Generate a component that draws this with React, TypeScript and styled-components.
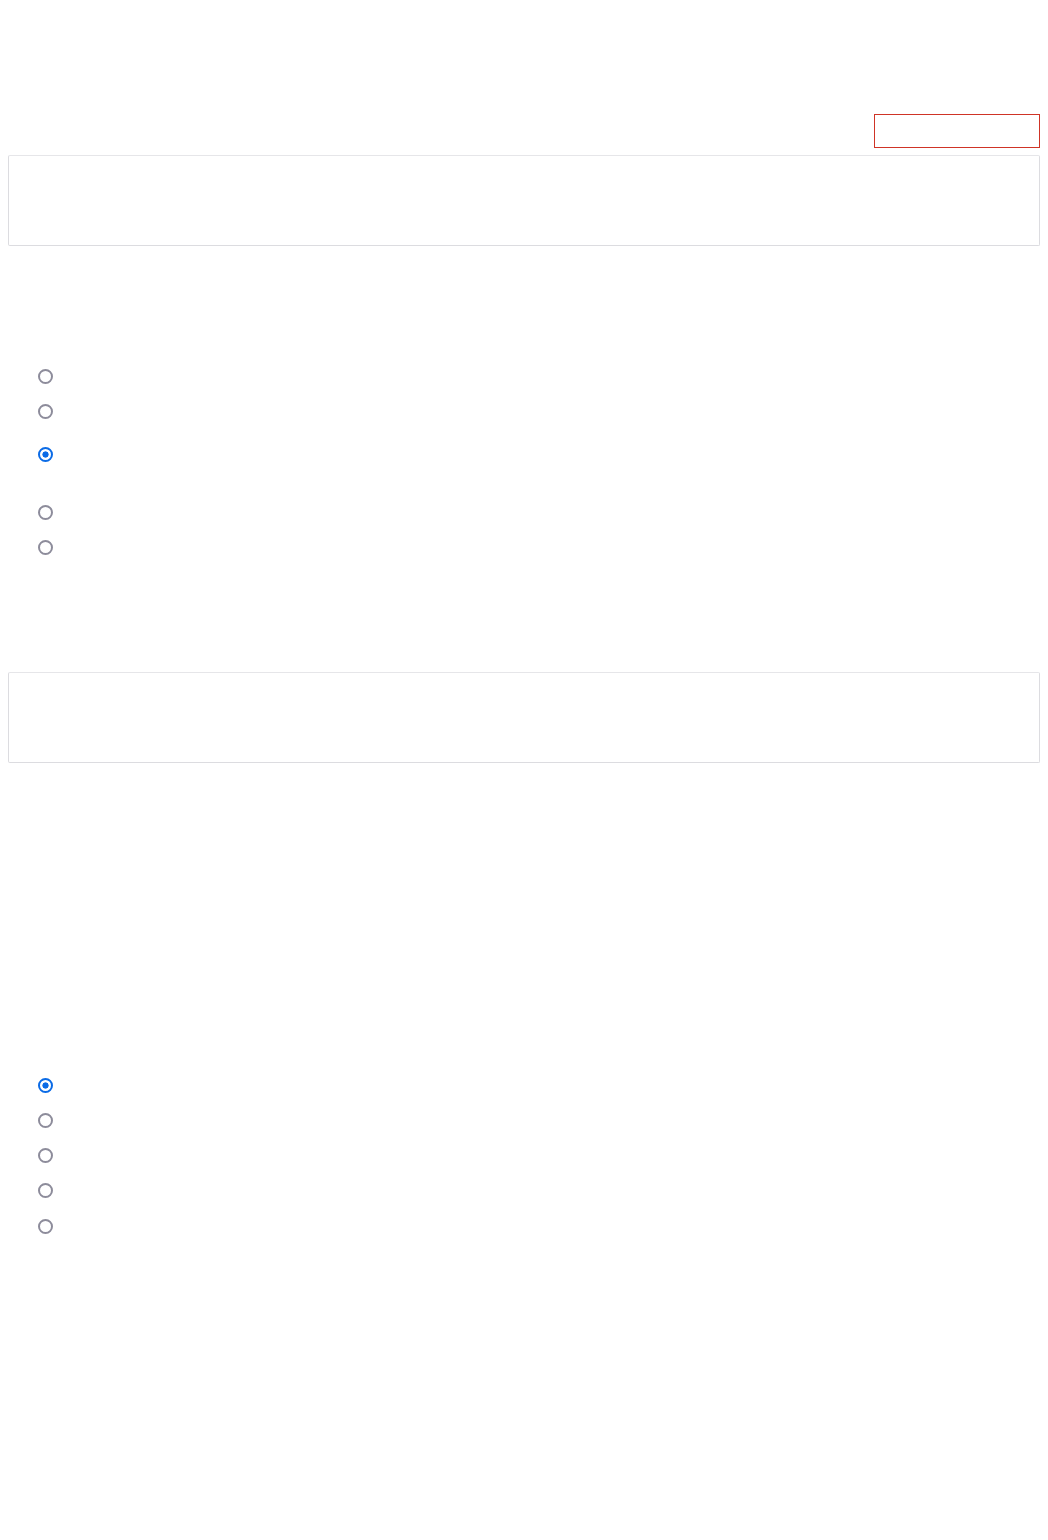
import React from "react";
import styled, { createGlobalStyle } from "styled-components";

const GlobalStyle = createGlobalStyle`
  body {
    margin: 8px;
    background: #ffffff;
    font-family: "Liberation Sans", Arial, sans-serif;
    color: #ffffff;
  }
`;

const Page = styled.main`
  display: flex;
  flex-direction: column;
  width: 1032px;
`;

const TopBar = styled.header`
  display: flex;
  justify-content: flex-end;
  padding-top: 106px;
`;

const ErrorButton = styled.button`
  width: 166px;
  height: 34px;
  border: 1px solid #cf3426;
  border-radius: 0;
  background: #ffffff;
  padding: 0;
`;

const TextBox = styled.textarea<{ $top: number }>`
  display: block;
  box-sizing: border-box;
  width: 100%;
  height: 91px;
  margin-top: ${(p) => p.$top}px;
  border: 1px solid #dcdce0;
  border-top-color: #e6e6e9;
  border-radius: 2px;
  resize: none;
  outline: none;
  background: #ffffff;
  font-family: "Liberation Sans", Arial, sans-serif;
`;

const OptionList = styled.ul<{ $top: number }>`
  list-style: none;
  margin: ${(p) => p.$top}px 0 0;
  padding: 0 0 0 29.5px;
  display: flex;
  flex-direction: column;
`;

const Option = styled.li<{ $before?: number; $after?: number }>`
  display: flex;
  align-items: center;
  height: 35px;
  margin-top: ${(p) => p.$before ?? 0}px;
  margin-bottom: ${(p) => p.$after ?? 0}px;
`;

const Radio = styled.input`
  appearance: none;
  box-sizing: border-box;
  width: 15px;
  height: 15px;
  margin: 0;
  border: 2px solid #8d8c9b;
  border-radius: 50%;
  background: #ffffff;

  &:checked {
    border-color: #0b6be6;
    background: radial-gradient(circle, #0b6be6 0 2.8px, #ffffff 3.4px);
  }
`;

interface Choice {
  id: string;
  before?: number;
  after?: number;
}

const firstChoices: Choice[] = [
  { id: "a1" },
  { id: "a2" },
  { id: "a3", before: 8, after: 23 },
  { id: "a4" },
  { id: "a5" },
];

const secondChoices: Choice[] = [
  { id: "b1" },
  { id: "b2" },
  { id: "b3" },
  { id: "b4", after: 1 },
  { id: "b5" },
];

const Choices = ({
  name,
  items,
  checked,
  top,
}: {
  name: string;
  items: Choice[];
  checked: string;
  top: number;
}) => (
  <OptionList $top={top}>
    {items.map((c) => (
      <Option key={c.id} $before={c.before} $after={c.after}>
        <Radio
          type="radio"
          name={name}
          value={c.id}
          defaultChecked={c.id === checked}
        />
      </Option>
    ))}
  </OptionList>
);

export default function App() {
  return (
    <>
      <GlobalStyle />
      <Page>
        <TopBar>
          <ErrorButton type="button" />
        </TopBar>
        <TextBox $top={7} />
        <Choices name="first" items={firstChoices} checked="a3" top={113} />
        <TextBox $top={107} />
        <Choices name="second" items={secondChoices} checked="b1" top={304.5} />
      </Page>
    </>
  );
}
